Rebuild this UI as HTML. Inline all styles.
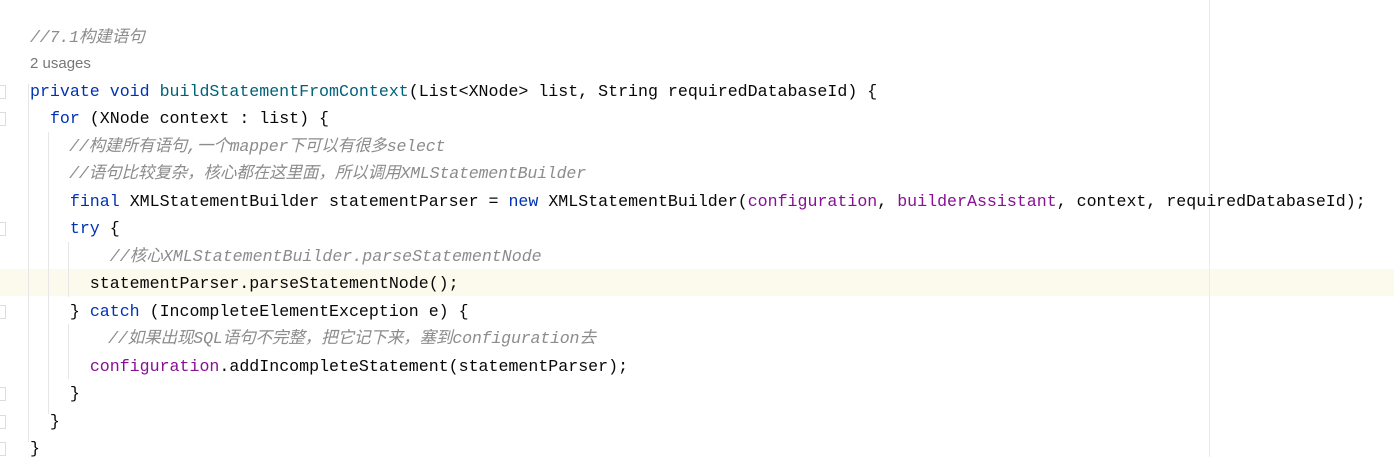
<!DOCTYPE html>
<html><head><meta charset="utf-8"><style>
body{margin:0;width:1394px;height:457px;background:#fff;position:relative;overflow:hidden;font-family:"Liberation Mono","Noto Sans CJK SC",monospace;font-size:16.63px;color:#080808}
.l{position:absolute;left:30px;white-space:pre;height:27px;line-height:27px}
.k{color:#0033b3}.c{color:#8c8c8c;font-style:italic}.m{color:#00627a}.f{color:#871094}
.cj{letter-spacing:-0.2px}
.hl{position:absolute;left:0;right:0;top:269px;height:27px;background:#fcfaed}
.g{position:absolute;width:1px;background:#e6e6e6}
.rm{position:absolute;left:1209px;top:0;width:1px;height:457px;background:#ebebeb}
.u{position:absolute;left:30px;top:55px;font-family:"Liberation Sans",sans-serif;font-size:15px;color:#777}
.fold{position:absolute;left:0;width:5px;height:12px;border:1px solid #ddd;border-left:none;background:#fff}
</style></head><body>
<div class="hl"></div>
<div class="rm"></div>
<div class="g" style="left:28px;top:84px;height:358px"></div>
<div class="g" style="left:48px;top:132px;height:282px"></div>
<div class="g" style="left:68px;top:242px;height:55px"></div>
<div class="g" style="left:68px;top:324px;height:55px"></div>
<div class="fold" style="top:85px"></div>
<div class="fold" style="top:112px"></div>
<div class="fold" style="top:222px"></div>
<div class="fold" style="top:305px"></div>
<div class="fold" style="top:387px"></div>
<div class="fold" style="top:415px"></div>
<div class="fold" style="top:442px"></div>
<div class="l c cj" style="top:24px">//7.1构建语句</div>
<div class="u">2 usages</div>
<div class="l" style="top:78px"><span class="k">private void </span><span class="m">buildStatementFromContext</span>(List&lt;XNode&gt; list, String requiredDatabaseId) {</div>
<div class="l" style="top:105px">  <span class="k">for</span> (XNode context : list) {</div>
<div class="l c cj" style="top:133px">    //构建所有语句,一个mapper下可以有很多select</div>
<div class="l c cj" style="top:160px">    //语句比较复杂，核心都在这里面，所以调用XMLStatementBuilder</div>
<div class="l" style="top:188px">    <span class="k">final </span>XMLStatementBuilder statementParser = <span class="k">new </span>XMLStatementBuilder(<span class="f">configuration</span>, <span class="f">builderAssistant</span>, context, requiredDatabaseId);</div>
<div class="l" style="top:215px">    <span class="k">try</span> {</div>
<div class="l c" style="top:243px">        //核心XMLStatementBuilder.parseStatementNode</div>
<div class="l" style="top:270px">      statementParser.parseStatementNode();</div>
<div class="l" style="top:298px">    } <span class="k">catch</span> (IncompleteElementException e) {</div>
<div class="l c cj" style="top:325px">        //如果出现SQL语句不完整，把它记下来，塞到configuration去</div>
<div class="l" style="top:353px">      <span class="f">configuration</span>.addIncompleteStatement(statementParser);</div>
<div class="l" style="top:380px">    }</div>
<div class="l" style="top:408px">  }</div>
<div class="l" style="top:435px">}</div>
</body></html>
